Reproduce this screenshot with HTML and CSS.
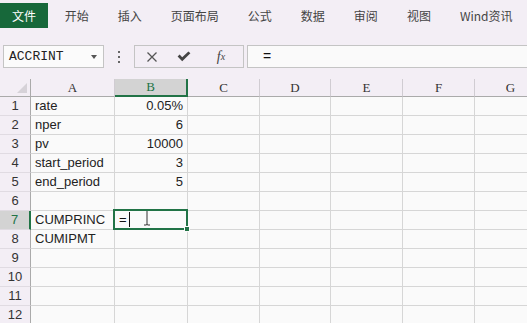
FILE: index.html
```html
<!DOCTYPE html>
<html lang="zh-CN">

<head>
  <meta charset="UTF-8" />
  <meta name="viewport" content="width=device-width, initial-scale=1.0" />
  <title>CUMPRINC</title>
  <link rel="stylesheet" href="styles.css">
</head>

<body>
  <!-- 菜单栏 -->
  <ul class="tabs">
    <li class="file">文件</li>
    <li>开始</li>
    <li>插入</li>
    <li>页面布局</li>
    <li>公式</li>
    <li>数据</li>
    <li>审阅</li>
    <li>视图</li>
    <li>Wind资讯</li>
  </ul>

  <!-- 编辑栏 -->
  <div class="bar">
    <div class="name-box">
      <span>ACCRINT</span>
      <i class="drop"></i>
    </div>
    <div class="dots"><i></i><i></i><i></i></div>
    <div class="fx-box">
      <span class="slot x">
        <svg width="12" height="12" viewBox="0 0 12 12">
          <path d="M1.5 1.5 L10.5 10.5 M10.5 1.5 L1.5 10.5" stroke="#555" stroke-width="1.3" fill="none" />
        </svg>
      </span>
      <span class="slot ok">
        <svg width="14" height="11" viewBox="0 0 14 11">
          <path d="M0.6 5.4 L2.6 3.6 L5.2 6.2 L11.4 0.4 L13.4 2.2 L5.2 10.2 Z" fill="#444" />
        </svg>
      </span>
      <span class="slot fx">f<sub>x</sub></span>
    </div>
    <div class="input">=</div>
  </div>

  <!-- 表格 -->
  <div class="grid">
    <table class="sheet">
      <tr class="head">
        <th class="corner"></th>
        <th>A</th>
        <th class="sel">B</th>
        <th>C</th>
        <th>D</th>
        <th>E</th>
        <th>F</th>
        <th>G</th>
      </tr>
      <tr>
        <th>1</th>
        <td>rate</td>
        <td class="num">0.05%</td>
        <td></td><td></td><td></td><td></td><td></td>
      </tr>
      <tr>
        <th>2</th>
        <td>nper</td>
        <td class="num">6</td>
        <td></td><td></td><td></td><td></td><td></td>
      </tr>
      <tr>
        <th>3</th>
        <td>pv</td>
        <td class="num">10000</td>
        <td></td><td></td><td></td><td></td><td></td>
      </tr>
      <tr>
        <th>4</th>
        <td>start_period</td>
        <td class="num">3</td>
        <td></td><td></td><td></td><td></td><td></td>
      </tr>
      <tr>
        <th>5</th>
        <td>end_period</td>
        <td class="num">5</td>
        <td></td><td></td><td></td><td></td><td></td>
      </tr>
      <tr>
        <th>6</th>
        <td></td><td></td><td></td><td></td><td></td><td></td><td></td>
      </tr>
      <tr>
        <th class="sel">7</th>
        <td>CUMPRINC</td>
        <td class="active">=<span class="caret"></span>
          <svg class="ibeam" width="8" height="17" viewBox="0 0 8 17">
            <path d="M1 1 H3 Q4 1 4 2 Q4 1 5 1 H7 M4 2 V15 M1 16 H3 Q4 16 4 15 Q4 16 5 16 H7" stroke="#333" stroke-width="1" fill="none" />
          </svg>
        </td>
        <td></td><td></td><td></td><td></td><td></td>
      </tr>
      <tr>
        <th>8</th>
        <td>CUMIPMT</td>
        <td></td><td></td><td></td><td></td><td></td><td></td>
      </tr>
      <tr>
        <th>9</th>
        <td></td><td></td><td></td><td></td><td></td><td></td><td></td>
      </tr>
      <tr>
        <th>10</th>
        <td></td><td></td><td></td><td></td><td></td><td></td><td></td>
      </tr>
      <tr>
        <th>11</th>
        <td></td><td></td><td></td><td></td><td></td><td></td><td></td>
      </tr>
      <tr>
        <th>12</th>
        <td></td><td></td><td></td><td></td><td></td><td></td><td></td>
      </tr>
    </table>
  </div>
</body>

</html>
```

FILE: styles.css
```css
* {
  margin: 0;
  padding: 0;
  box-sizing: border-box;
}

li,
ul {
  list-style: none;
}

body {
  width: 527px;
  height: 323px;
  overflow: hidden;
  background-color: #f3eef5;
  font-family: "Liberation Sans", "Noto Sans CJK SC", sans-serif;
  color: #222;
}

/* 菜单栏 */
.tabs {
  display: flex;
  padding-top: 3px;
  height: 28px;
  font-family: "Noto Sans CJK SC", sans-serif;
  font-size: 12px;
  color: #444;
}

.tabs li {
  padding: 0 14.5px;
  line-height: 25px;
  white-space: nowrap;
}

.tabs .file {
  width: 56px;
  padding: 0;
  margin-right: 2.5px;
  text-align: center;
  background-color: #17683a;
  color: #fff;
}

/* 编辑栏 */
.bar {
  display: flex;
  margin-top: 17px;
  height: 23px;
}

.name-box {
  display: flex;
  align-items: center;
  margin-left: 3px;
  width: 101px;
  padding-left: 5px;
  border: 1px solid #c4c4c4;
  background-color: #fbfbfb;
  font-family: "Liberation Mono", monospace;
  font-size: 13px;
  color: #222;
}

.name-box .drop {
  margin-left: auto;
  margin-right: 6px;
  border-top: 4px solid #555;
  border-left: 3.5px solid transparent;
  border-right: 3.5px solid transparent;
}

.dots {
  display: flex;
  flex-direction: column;
  align-items: center;
  justify-content: center;
  gap: 3px;
  width: 30px;
}

.dots i {
  width: 2px;
  height: 2px;
  background-color: #666;
}

.fx-box {
  display: flex;
  align-items: center;
  width: 110px;
  border: 1px solid #c4c4c4;
}

.fx-box .slot {
  display: flex;
  justify-content: center;
  align-items: center;
}

.fx-box .x {
  width: 34px;
}

.fx-box .ok {
  width: 30px;
}

.fx-box .fx {
  width: 44px;
  font-family: "Liberation Serif", serif;
  font-style: italic;
  font-size: 14px;
  color: #444;
}

.fx-box .fx sub {
  font-size: 10px;
  vertical-align: -1px;
}

.input {
  flex: 1;
  margin-left: 3px;
  padding-left: 15px;
  border: 1px solid #c4c4c4;
  border-right: none;
  background-color: #fafafa;
  font-size: 14px;
  line-height: 21px;
  color: #111;
}

/* 表格 */
.grid {
  margin-top: 11px;
  width: 527px;
  overflow: hidden;
}

.sheet {
  border-collapse: separate;
  border-spacing: 0;
  table-layout: fixed;
  width: 547px;
  background-color: #fafafa;
}

.sheet td,
.sheet th {
  height: 19px;
  padding: 0;
  border-right: 1px solid #d6d6d6;
  border-bottom: 1px solid #d6d6d6;
  font-weight: normal;
  vertical-align: bottom;
  white-space: nowrap;
  overflow: visible;
}

.sheet td {
  padding: 0 3px 1px 4px;
  font-size: 13px;
  line-height: 16px;
  color: #222;
}

.sheet td.num {
  text-align: right;
  padding-right: 4px;
}

.sheet th {
  width: 31px;
  background-color: #f3eef5;
  border-bottom-color: #e0dbe2;
  border-right-color: #aaa;
  font-size: 13px;
  line-height: 16px;
  color: #333;
  padding-bottom: 1px;
}

.sheet .head th {
  height: 18px;
  border-bottom-color: #aaa;
  border-right-color: #d0ccd2;
  font-family: "Liberation Serif", serif;
  font-size: 13px;
  line-height: 15px;
}

.sheet .head th:nth-child(2) { width: 84px; }
.sheet .head th:nth-child(3) { width: 73px; }
.sheet .head th:nth-child(4) { width: 72px; }
.sheet .head th:nth-child(5) { width: 71px; }
.sheet .head th:nth-child(6) { width: 72px; }
.sheet .head th:nth-child(7) { width: 72px; }
.sheet .head th:nth-child(8) { width: 72px; }

.sheet .head .corner {
  position: relative;
  border-right-color: #aaa;
}

.sheet .head .corner::after {
  content: "";
  position: absolute;
  right: 3px;
  bottom: 3px;
  border-left: 10px solid transparent;
  border-bottom: 10px solid #d6d2d8;
}

.sheet .head th.sel {
  background-color: #d3d3d3;
  border-bottom: 2px solid #217346;
  color: #217346;
}

.sheet th.sel {
  background-color: #d3d3d3;
  border-right: 2px solid #217346;
  color: #217346;
}

.sheet td.active {
  position: relative;
  color: #111;
}

.sheet td.active::after {
  content: "";
  position: absolute;
  top: -2px;
  left: -2px;
  right: -1px;
  bottom: -1px;
  border: 2px solid #217346;
}

.caret {
  display: inline-block;
  width: 1px;
  height: 15px;
  margin-left: 2px;
  vertical-align: -3px;
  background-color: #111;
}

.ibeam {
  position: absolute;
  left: 28px;
  top: -2px;
}

.sheet td.active::before {
  content: "";
  position: absolute;
  right: -3px;
  bottom: -3px;
  width: 4px;
  height: 4px;
  background-color: #217346;
  border: 1px solid #fafafa;
  z-index: 2;
}
```
